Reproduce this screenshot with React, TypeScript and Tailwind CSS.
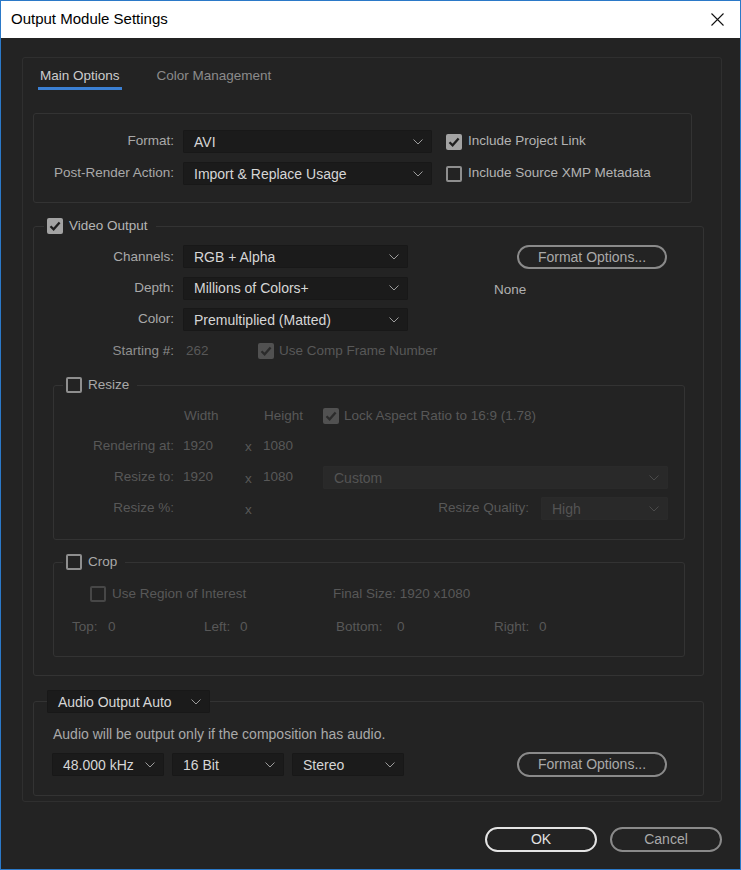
import React from 'react';

const font = "font-['Liberation_Sans',Arial,sans-serif]";

const Chevron: React.FC<{ dim?: boolean }> = ({ dim }) => (
  <svg width="10" height="6" viewBox="0 0 10 6" fill="none">
    <path d="M0.5 0.5 L5 5 L9.5 0.5" stroke={dim ? '#4a4a4a' : '#9c9c9c'} strokeWidth="1" />
  </svg>
);

const Select: React.FC<{ value: string; w: string; dim?: boolean; h?: string }> = ({ value, w, dim, h = 'h-[23px]' }) => (
  <div
    className={`${w} ${h} flex items-center justify-between pl-[10px] pr-[8px] rounded-[1px] border ${
      dim ? 'bg-[#292929] border-[#2a2a2a] text-[#545454]' : 'bg-[#1b1b1b] border-[#181818] text-[#d6d6d6]'
    } text-[14px] leading-none shrink-0`}
  >
    <span>{value}</span>
    <Chevron dim={dim} />
  </div>
);

const Check: React.FC<{ checked?: boolean; dim?: boolean }> = ({ checked, dim }) =>
  checked ? (
    <div className={`w-[16px] h-[16px] rounded-[2px] shrink-0 flex items-center justify-center ${dim ? 'bg-[#515151]' : 'bg-[#a3a3a3]'}`}>
      <svg width="16" height="16" viewBox="0 0 16 16" fill="none">
        <path d="M3.5 8.2 L6.6 11.3 L12.6 4.4" stroke={dim ? '#2b2b2b' : '#1f1f1f'} strokeWidth="2.3" />
      </svg>
    </div>
  ) : (
    <div className={`w-[16px] h-[16px] rounded-[2px] shrink-0 border-2 ${dim ? 'border-[#474747]' : 'border-[#8e8e8e]'}`} />
  );

const Pill: React.FC<{ label: string; w: string; strong?: boolean; h?: string }> = ({ label, w, strong, h = 'h-[25px]' }) => (
  <div
    className={`${w} ${h} rounded-full border-2 flex items-center justify-center text-[14px] shrink-0 ${
      strong ? 'border-[#e4e4e4] text-[#e2e2e2]' : 'border-[#8a8a8a] text-[#a9a9a9]'
    }`}
  >
    {label}
  </div>
);

const Label: React.FC<{ w: string; children: React.ReactNode; color?: string }> = ({ w, children, color = 'text-[#a9a9a9]' }) => (
  <div className={`${w} shrink-0 text-right text-[13.5px] ${color}`}>{children}</div>
);

const dimText = 'text-[#585858]';

export default function App() {
  return (
    <div className={`w-[741px] h-[870px] border border-[#2b79c8] bg-[#232323] overflow-hidden ${font}`}>
      <div className="h-[37px] bg-white flex items-center justify-between pl-[10px] pr-[16px]">
        <span className="text-[15px] text-black">Output Module Settings</span>
        <svg width="13" height="13" viewBox="0 0 13 13" fill="none">
          <path d="M0.5 0.5 L12.5 12.5 M12.5 0.5 L0.5 12.5" stroke="#111" strokeWidth="1.1" />
        </svg>
      </div>

      <div className="pt-[19px] pl-[21px]">
        <div className="w-[700px] border border-[#2f2f2f] rounded-[3px] pt-[10px] pb-[5px]">
          {/* tabs */}
          <div className="flex items-start pl-[15px] gap-[35px] text-[13.5px] leading-[16px]">
            <div className="flex flex-col">
              <span className="px-[2px] text-[#cdcdcd]">Main Options</span>
              <div className="mt-[3px] h-[3px] bg-[#3b80d4]" />
            </div>
            <span className="text-[#8b8b8b]">Color Management</span>
          </div>

          <div className="ml-[10px] mt-[23px]">
            {/* format group */}
            <div className="w-[659px] border border-[#333] rounded-[3px] pt-[16px] pb-[17px] flex flex-col gap-[9px]">
              <div className="flex items-center h-[23px]">
                <Label w="w-[140px]">Format:</Label>
                <div className="ml-[9px]"><Select value="AVI" w="w-[249px]" /></div>
                <div className="ml-[14px]"><Check checked /></div>
                <span className="ml-[6px] text-[13.5px] text-[#b3b3b3]">Include Project Link</span>
              </div>
              <div className="flex items-center h-[23px]">
                <Label w="w-[140px]">Post-Render Action:</Label>
                <div className="ml-[9px]"><Select value="Import & Replace Usage" w="w-[249px]" /></div>
                <div className="ml-[14px]"><Check /></div>
                <span className="ml-[6px] text-[13.5px] text-[#b3b3b3]">Include Source XMP Metadata</span>
              </div>
            </div>

            {/* video output */}
            <fieldset className="mt-[15px] w-[671px] min-w-0 border border-[#333] rounded-[3px] pb-[18px]">
              <legend className="ml-[10px] px-[3px] pr-[8px]">
                <span className="flex items-center h-[16px]">
                  <Check checked />
                  <span className="ml-[6px] text-[13.5px] text-[#b5b5b5]">Video Output</span>
                </span>
              </legend>
              <div className="pt-[11px] flex flex-col gap-[8.5px]">
                <div className="flex items-start h-[23px]">
                  <Label w="w-[140px] leading-[23px]">Channels:</Label>
                  <div className="ml-[9px]"><Select value="RGB + Alpha" w="w-[225px]" /></div>
                  <div className="ml-[109px]"><Pill label="Format Options..." w="w-[150px]" h="h-[24px]" /></div>
                </div>
                <div className="flex items-center h-[23px]">
                  <Label w="w-[140px]">Depth:</Label>
                  <div className="ml-[9px]"><Select value="Millions of Colors+" w="w-[225px]" /></div>
                  <span className="ml-[86px] mt-[4px] text-[13.5px] text-[#b0b0b0]">None</span>
                </div>
                <div className="flex items-center h-[23px]">
                  <Label w="w-[140px]">Color:</Label>
                  <div className="ml-[9px]"><Select value="Premultiplied (Matted)" w="w-[225px]" /></div>
                </div>
              </div>
              <div className="mt-[12px] flex items-center h-[16px] text-[13.5px]">
                <Label w="w-[140px]" color="text-[#8f8f8f]">Starting #:</Label>
                <span className={`ml-[12px] w-[72px] ${dimText}`}>262</span>
                <Check checked dim />
                <span className={`ml-[5px] ${dimText}`}>Use Comp Frame Number</span>
              </div>

              {/* resize */}
              <fieldset className="mt-[18px] ml-[19px] w-[632px] min-w-0 border border-[#333] rounded-[3px] pb-[19px]">
                <legend className="ml-[9px] px-[3px] pr-[8px]">
                  <span className="flex items-center h-[16px]">
                    <Check />
                    <span className="ml-[6px] text-[13.5px] text-[#a9a9a9]">Resize</span>
                  </span>
                </legend>
                <div className={`pt-[15px] text-[13.5px] ${dimText}`}>
                  <div className="flex items-center h-[16px]">
                    <div className="w-[120px] shrink-0" />
                    <span className="ml-[9px] w-[62px] shrink-0 pl-[1px]">Width</span>
                    <span className="w-[18px] shrink-0" />
                    <span className="w-[60px] shrink-0 pl-[1px]">Height</span>
                    <Check checked dim />
                    <span className="ml-[5px]">Lock Aspect Ratio to 16:9 (1.78)</span>
                  </div>
                  <div className="mt-[14px] flex items-center h-[16px]">
                    <Label w="w-[120px]" color={dimText}>Rendering at:</Label>
                    <span className="ml-[9px] w-[62px] shrink-0">1920</span>
                    <span className="w-[18px] shrink-0 mt-[3px]">x</span>
                    <span className="w-[60px] shrink-0">1080</span>
                  </div>
                  <div className="mt-[12px] flex items-center h-[23px]">
                    <Label w="w-[120px]" color={dimText}>Resize to:</Label>
                    <span className="ml-[9px] w-[62px] shrink-0">1920</span>
                    <span className="w-[18px] shrink-0 mt-[3px]">x</span>
                    <span className="w-[60px] shrink-0">1080</span>
                    <Select value="Custom" w="w-[345px]" dim />
                  </div>
                  <div className="mt-[8px] flex items-center h-[23px]">
                    <Label w="w-[120px]" color={dimText}>Resize %:</Label>
                    <span className="ml-[9px] w-[62px] shrink-0" />
                    <span className="w-[18px] shrink-0 mt-[3px]">x</span>
                    <span className="w-[60px] shrink-0" />
                    <div className="flex-1 text-right">Resize Quality:</div>
                    <div className="ml-[12px] mr-[16px]"><Select value="High" w="w-[127px]" dim /></div>
                  </div>
                </div>
              </fieldset>

              {/* crop */}
              <fieldset className="mt-[14px] ml-[19px] w-[632px] min-w-0 border border-[#333] rounded-[3px] pb-[21px]">
                <legend className="ml-[9px] px-[3px] pr-[8px]">
                  <span className="flex items-center h-[16px]">
                    <Check />
                    <span className="ml-[6px] text-[13.5px] text-[#a9a9a9]">Crop</span>
                  </span>
                </legend>
                <div className={`pt-[16px] text-[13.5px] ${dimText}`}>
                  <div className="flex items-center h-[16px] pl-[36px]">
                    <Check dim />
                    <span className="ml-[6px] w-[221px] shrink-0">Use Region of Interest</span>
                    <span>Final Size: 1920 x1080</span>
                  </div>
                  <div className="mt-[17px] flex items-center h-[16px] pl-[18px]">
                    <span className="w-[36px] shrink-0">Top:</span>
                    <span className="w-[96px] shrink-0">0</span>
                    <span className="w-[36px] shrink-0">Left:</span>
                    <span className="w-[96px] shrink-0">0</span>
                    <span className="w-[61px] shrink-0">Bottom:</span>
                    <span className="w-[97px] shrink-0">0</span>
                    <span className="w-[45px] shrink-0">Right:</span>
                    <span>0</span>
                  </div>
                </div>
              </fieldset>
            </fieldset>

            {/* audio */}
            <fieldset className="mt-[14px] w-[671px] min-w-0 border border-[#333] rounded-[3px] pb-[18px]">
              <legend className="ml-[13px] px-0">
                <Select value="Audio Output Auto" w="w-[163px]" />
              </legend>
              <div className="pt-[13px] pl-[19px] text-[14px] leading-[16px] text-[#a9a9a9]">
                Audio will be output only if the composition has audio.
              </div>
              <div className="mt-[10px] flex items-center h-[25px] pl-[18px] gap-[8px]">
                <Select value="48.000 kHz" w="w-[112px]" />
                <Select value="16 Bit" w="w-[112px]" />
                <Select value="Stereo" w="w-[112px]" />
                <div className="ml-[105px]"><Pill label="Format Options..." w="w-[150px]" /></div>
              </div>
            </fieldset>
          </div>
        </div>

        <div className="w-[700px] pt-[25px] flex justify-end gap-[13px]">
          <Pill label="OK" w="w-[112px]" strong />
          <Pill label="Cancel" w="w-[112px]" />
        </div>
      </div>
    </div>
  );
}
